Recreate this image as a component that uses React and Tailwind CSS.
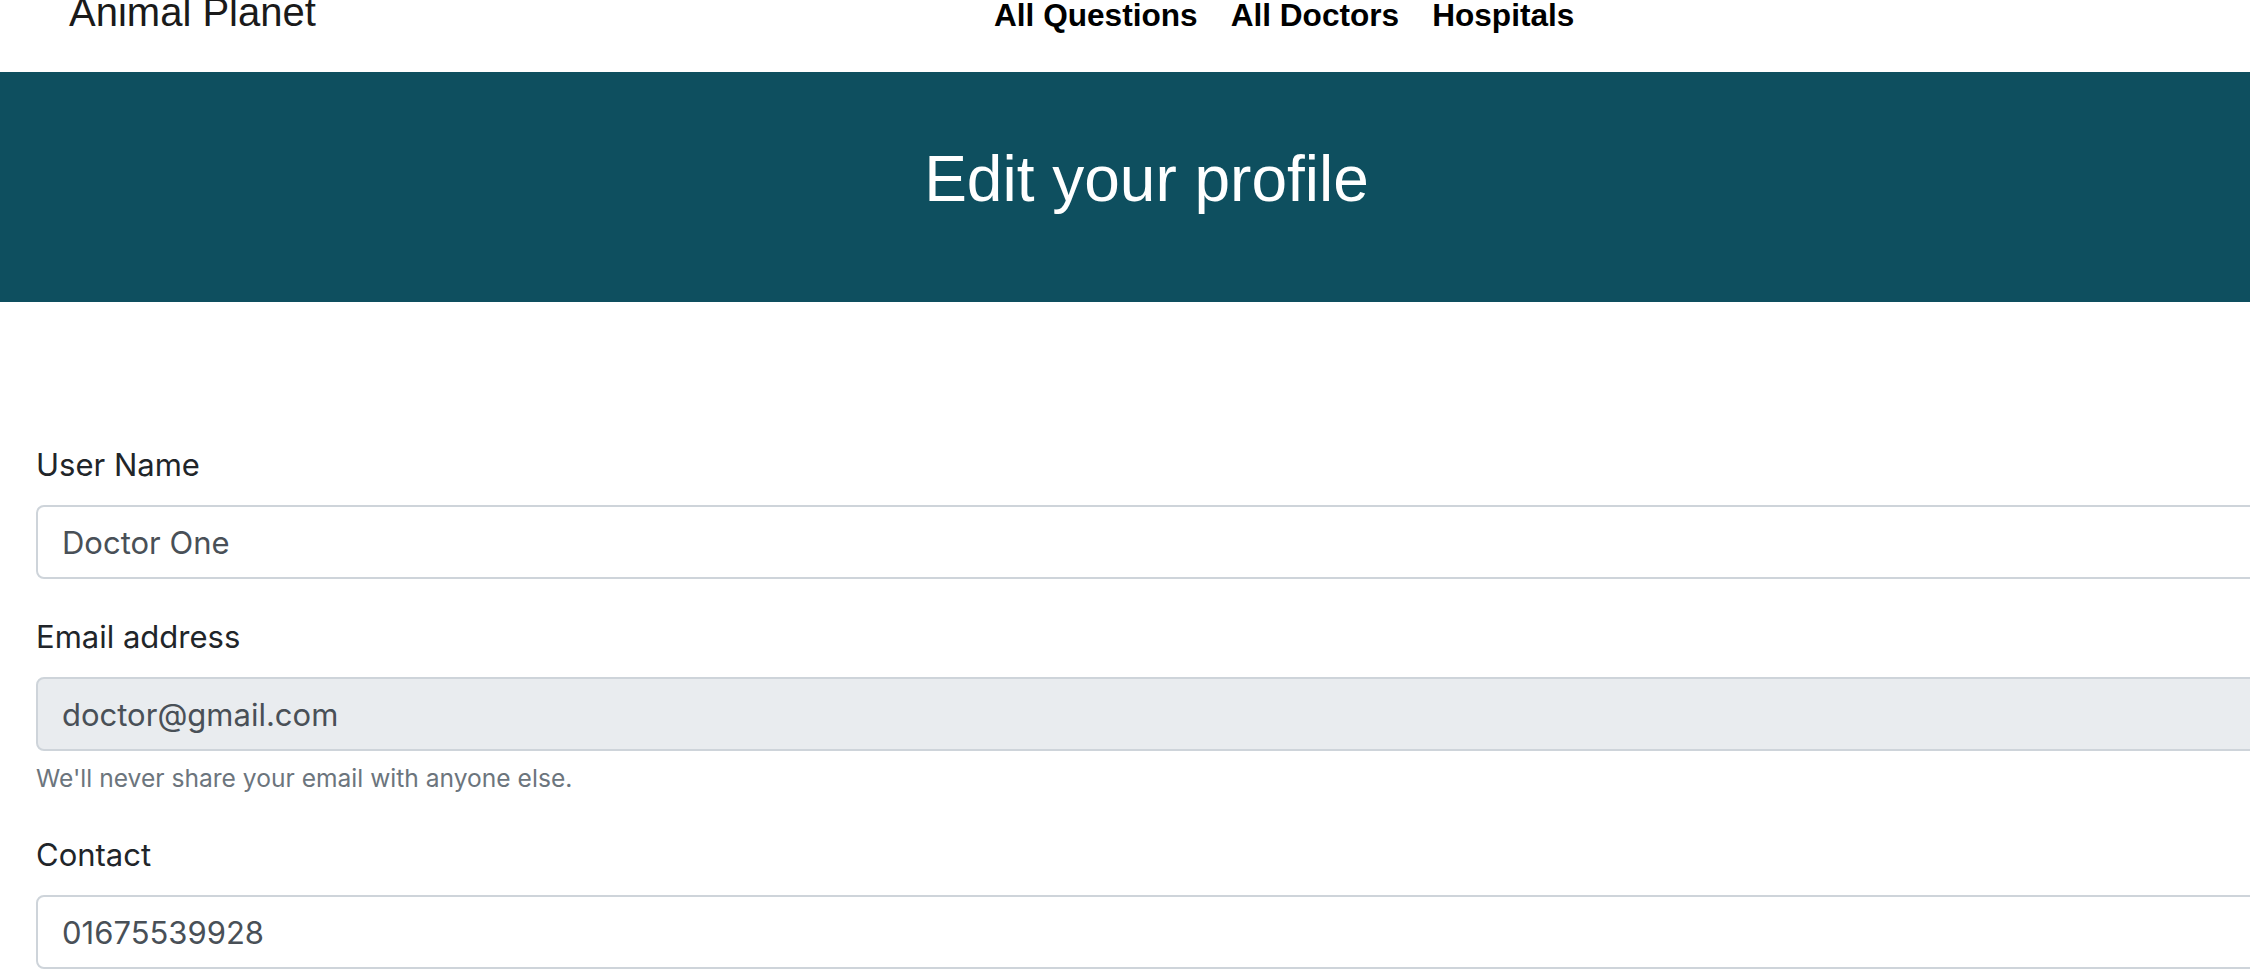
import React from "react";

const navLinks = ["All Questions", "All Doctors", "Hospitals"];

const Field = ({ label, value, disabled, help }) => (
  <div className="mb-[35px]">
    <label className="block h-[46px] leading-[46px] mb-[17px] text-[31px] text-[#212529]">{label}</label>
    <input
      readOnly
      value={value}
      className={`block w-full h-[74px] border-2 border-[#ced4da] rounded-[8px] pl-[24px] text-[31px] text-[#495057] outline-none ${
        disabled ? "bg-[#e9ecef]" : "bg-white"
      }`}
    />
    {help && <p className="mt-[9px] h-[37px] leading-[37px] text-[24.6px] text-[#6c757d]">{help}</p>}
  </div>
);

export default function App() {
  return (
    <div className="w-full overflow-hidden bg-white">
      <div className="w-[2293px]">
        {/* Navbar */}
        <header className="h-[72px] overflow-hidden bg-white font-['Liberation_Sans',Arial,sans-serif]">
          <div className="flex items-baseline -mt-[8px]">
            <div className="w-[994px] pl-[69px] text-[40px] leading-none text-[#1a1a1a]">Animal Planet</div>
            <nav className="flex items-baseline gap-[33px]">
              {navLinks.map((l) => (
                <a key={l} className="text-[31.6px] leading-none font-bold text-black">
                  {l}
                </a>
              ))}
            </nav>
          </div>
        </header>

        {/* Banner */}
        <div className="h-[230px] bg-[#0e4f5f] pt-[75px] text-center font-['Liberation_Sans',Arial,sans-serif]">
          <h1 className="text-[64px] leading-none text-white">Edit your profile</h1>
        </div>

        {/* Form */}
        <form className="pt-[140px] px-[36px] font-['Inter','Noto_Sans',sans-serif]">
          <Field label="User Name" value="Doctor One" />
          <Field
            label="Email address"
            value="doctor@gmail.com"
            disabled
            help="We'll never share your email with anyone else."
          />
          <Field label="Contact" value="01675539928" />
        </form>
      </div>
    </div>
  );
}
